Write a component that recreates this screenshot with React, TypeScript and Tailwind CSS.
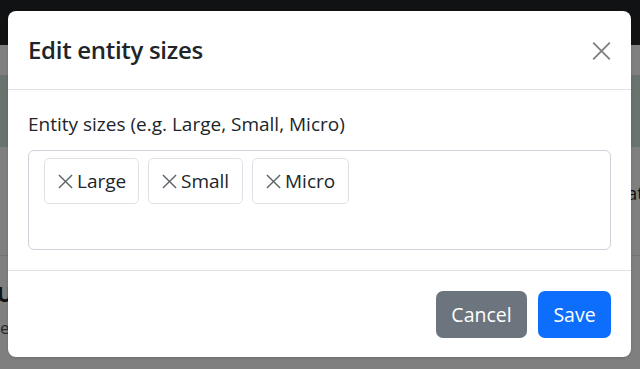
const sizes = [
  { label: "Large", w: "w-[95px]" },
  { label: "Small", w: "w-[95px]" },
  { label: "Micro", w: "w-[97px]" },
];

function CrossIcon({ className, width = 1.6 }: { className?: string; width?: number }) {
  return (
    <svg viewBox="0 0 16 16" className={className} fill="none" stroke="currentColor" strokeWidth={width}>
      <path d="M1 1l14 14M15 1L1 15" />
    </svg>
  );
}

export default function App() {
  return (
    <div className="relative w-[640px] h-[369px] overflow-hidden bg-white font-['Open_Sans',sans-serif] text-[#212529]">
      {/* page behind the modal */}
      <div className="h-[45px] bg-[#212529]" />
      <div className="h-[30px]" />
      <div className="h-[72px] bg-[#d1e7dd]" />
      <div className="flex justify-end pt-[34px] h-[108px]">
        <span className="mr-[-4px] text-[19px] leading-[24px]">at</span>
      </div>
      <div className="border-t border-[#e6e6e6] pt-[26px]">
        <div className="ml-[-3px] text-[21px] font-bold leading-[24px]">Us</div>
        <div className="ml-[0px] mt-[12px] text-[17px] leading-[20px] text-[#555]">e</div>
      </div>

      {/* backdrop */}
      <div className="absolute inset-0 bg-black/50" />

      {/* modal */}
      <div className="absolute left-[8px] top-[11px] w-[623px] h-[346px] rounded-[8px] bg-white shadow-sm flex flex-col">
        <div className="h-[79px] px-[20px] flex items-center justify-between border-b border-[#dee2e6]">
          <h5 className="text-[24px] font-semibold leading-[30px] tracking-[-0.3px]">Edit entity sizes</h5>
          <CrossIcon className="w-[19px] h-[20px] text-[#808080] mt-[1px]" />
        </div>

        <div className="px-[20px] pt-[21px] pb-[20px] border-b border-[#dee2e6]">
          <label className="block text-[19px] leading-[27px] mb-[12px]">
            Entity sizes (e.g. Large, Small, Micro)
          </label>
          <div className="h-[100px] border border-[#ced4da] rounded-[6px] px-[15px] pt-[7px]">
            <div className="flex gap-[9px]">
              {sizes.map((s) => (
                <div
                  key={s.label}
                  className={`${s.w} h-[46px] pl-[13px] flex items-center gap-[4px] border border-[#dee2e6] rounded-[5px] text-[19px]`}
                >
                  <CrossIcon className="w-[15px] h-[15px] text-[#5c636a]" width={1.5} />
                  <span>{s.label}</span>
                </div>
              ))}
            </div>
          </div>
        </div>

        <div className="flex-1 flex justify-end items-start gap-[11px] px-[20px] pt-[20px]">
          <button className="h-[47px] w-[91px] rounded-[7px] bg-[#6c757d] text-white text-[19.5px]">
            Cancel
          </button>
          <button className="h-[47px] w-[73px] rounded-[7px] bg-[#0d6efd] text-white text-[19.5px]">
            Save
          </button>
        </div>
      </div>
    </div>
  );
}
